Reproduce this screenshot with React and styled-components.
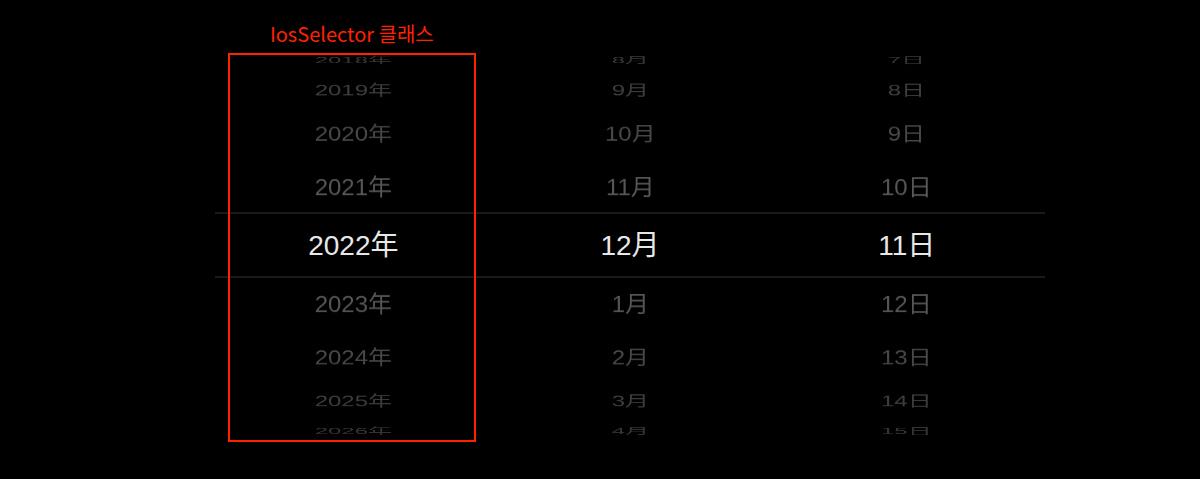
import { createGlobalStyle, styled } from "styled-components";

const ITEM_HEIGHT = 63;
const ITEM_ANGLE = 17;
const RADIUS = 200;

const GlobalStyle = createGlobalStyle`
  html, body {
    margin: 0;
    background: #000;
  }
  body {
    font-family: "Liberation Sans", "Noto Sans CJK SC", sans-serif;
  }
`;

const Page = styled.div`
  width: 1200px;
  height: 479px;
  padding: 53px 0 0 215px;
  box-sizing: border-box;
  background: #000;
`;

const DateSelector = styled.div`
  display: flex;
  width: 830px;
`;

const Wheel = styled.div`
  position: relative;
  flex: 1;
  height: 384px;
  text-align: center;
  overflow: hidden;

  &::before,
  &::after {
    content: "";
    position: absolute;
    left: 0;
    z-index: 1;
    width: 100%;
    height: 50%;
    pointer-events: none;
  }

  &::before {
    top: 0;
    background: linear-gradient(to bottom, rgba(1, 1, 1, 0.5), rgba(1, 1, 1, 0));
  }

  &::after {
    bottom: 0;
    background: linear-gradient(to top, rgba(1, 1, 1, 0.5), rgba(1, 1, 1, 0));
  }
`;

const Cylinder = styled.ul`
  position: absolute;
  top: 50%;
  left: 0;
  width: 100%;
  height: 0;
  margin: 0;
  padding: 0;
  list-style: none;
  transform-style: preserve-3d;
  transform: translateZ(${-RADIUS}px) rotateX(0deg);
  color: #666;
  font-size: 24px;
`;

const Option = styled.li`
  position: absolute;
  top: ${-ITEM_HEIGHT / 2}px;
  left: 0;
  width: 100%;
  height: ${ITEM_HEIGHT}px;
  line-height: ${ITEM_HEIGHT}px;
  backface-visibility: hidden;
  transform: rotateX(${(p) => -p.$index * ITEM_ANGLE}deg) translateZ(${RADIUS}px);
`;

const Highlight = styled.div`
  position: absolute;
  top: 50%;
  left: 0;
  z-index: 2;
  width: 100%;
  height: ${ITEM_HEIGHT}px;
  transform: translateY(-50%);
  background: #000;
  border-top: 1px solid #333;
  border-bottom: 1px solid #333;
  color: #e8e8e8;
  font-size: 28px;
  line-height: ${ITEM_HEIGHT}px;
`;

const Column = styled.div`
  position: relative;
  flex: 1;
  display: flex;
`;

/* red note box drawn over the year wheel */
const Annotation = styled.div`
  position: absolute;
  top: 0;
  bottom: -5px;
  left: 13px;
  right: 16px;
  z-index: 3;
  border: 2px solid #ff2200;
  pointer-events: none;
`;

const AnnotationLabel = styled.span`
  position: absolute;
  bottom: 100%;
  left: 50%;
  margin-bottom: 8px;
  transform: translateX(-50%);
  white-space: nowrap;
  color: #ff2200;
  font-family: "Noto Sans CJK KR", sans-serif;
  font-size: 20px;
  line-height: 26px;
`;

const OFFSETS = [-5, -4, -3, -2, -1, 1, 2, 3, 4, 5];

const wrap = (v, min, max) => {
  const span = max - min + 1;
  return ((((v - min) % span) + span) % span) + min;
};

const columns = [
  { key: "year", value: 2022, format: (v) => `${v}年`, annotate: true },
  { key: "month", value: 12, format: (v) => `${wrap(v, 1, 12)}月` },
  { key: "day", value: 11, format: (v) => `${wrap(v, 1, 31)}日` },
];

const IosWheel = ({ value, format }) => (
  <Wheel>
    <Cylinder>
      {OFFSETS.map((o) => (
        <Option key={o} $index={o}>
          {format(value + o)}
        </Option>
      ))}
    </Cylinder>
    <Highlight>{format(value)}</Highlight>
  </Wheel>
);

const App = () => (
  <>
    <GlobalStyle />
    <Page>
      <DateSelector>
        {columns.map((c) => (
          <Column key={c.key}>
            <IosWheel value={c.value} format={c.format} />
            {c.annotate && (
              <Annotation>
                <AnnotationLabel>IosSelector 클래스</AnnotationLabel>
              </Annotation>
            )}
          </Column>
        ))}
      </DateSelector>
    </Page>
  </>
);

export default App;
